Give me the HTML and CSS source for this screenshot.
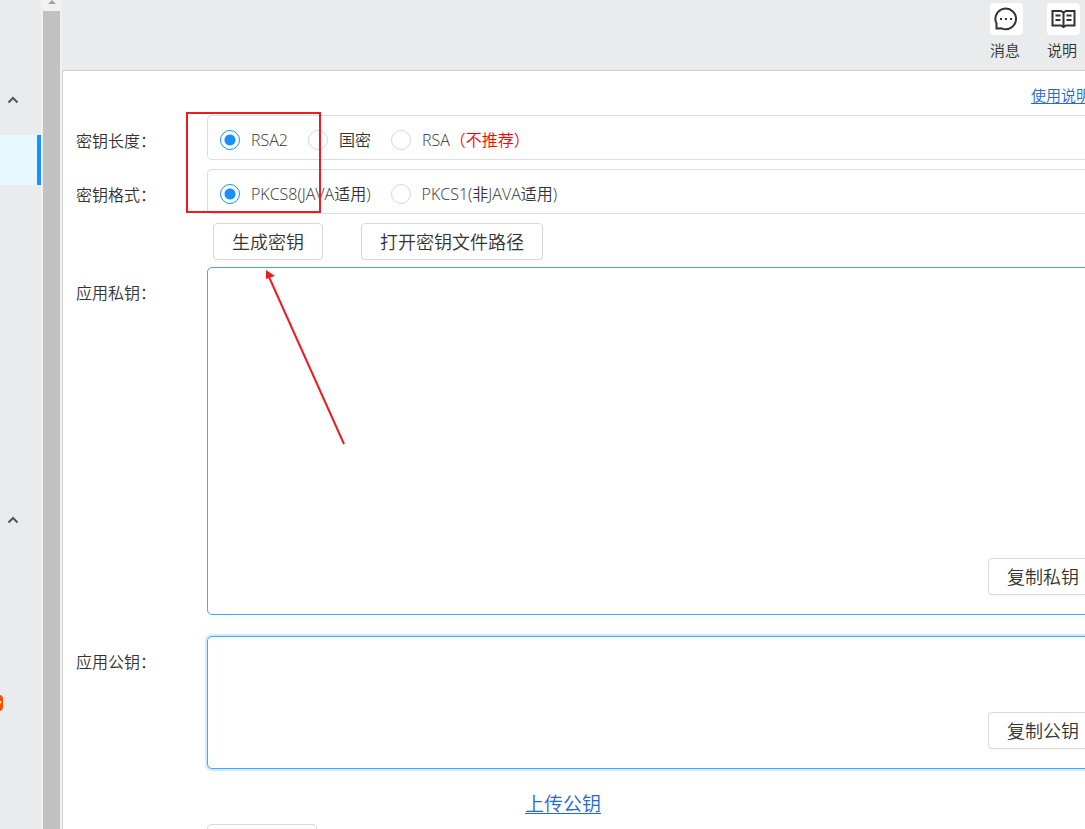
FILE: index.html
```html
<!DOCTYPE html>
<html lang="zh-CN">
<head>
<meta charset="utf-8">
<title>密钥工具</title>
<link rel="stylesheet" href="styles.css">
</head>
<body>
<div class="app">
  <nav class="sidebar">
    <button class="group" type="button" aria-label="收起">
      <svg class="chevron" viewBox="0 0 12 8"><path d="M1.500 6.500 6 2l4.500 4.500"/></svg>
    </button>
    <a class="item active" href="#" aria-label="当前页"></a>
    <div class="spacer"></div>
    <button class="group" type="button" aria-label="收起">
      <svg class="chevron" viewBox="0 0 12 8"><path d="M1.500 6.500 6 2l4.500 4.500"/></svg>
    </button>
    <div class="item tagged"><span class="badge">new</span></div>
  </nav>
  <div class="scrollbar">
    <svg class="up" viewBox="0 0 10 5"><path d="M0 5 5 0l5 5z"/></svg>
    <div class="thumb"></div>
  </div>
  <div class="page">
    <header class="header">
      <a class="tool" href="#">
        <span class="tile"><svg viewBox="0 0 32 32"><path d="M6.500 25.500V20.500A10.300 10.300 0 1 1 11.500 25.300z"/><path class="dots" d="M10 15h2v2h-2zM15 15h2v2h-2zM20 15h2v2h-2z"/></svg></span>
        <span>消息</span>
      </a>
      <a class="tool" href="#">
        <span class="tile"><svg viewBox="0 0 32 32"><path d="M5.500 8H14l2.500 1.500L19 8h8.500v14.500H19L16.500 24 14 22.500H5.500zM16.500 9.500V24M8.500 12.500h5M8.500 17h5M19.500 12.500h5M19.500 17h5"/></svg></span>
        <span>说明</span>
      </a>
    </header>
    <main class="main">
      <div class="help"><a href="#">使用说明</a></div>
      <form class="form">
        <span class="label" id="len">密钥长度：</span>
        <div class="options" role="radiogroup" aria-labelledby="len">
          <label class="option"><input type="radio" name="length" checked><span>RSA2</span></label>
          <label class="option"><input type="radio" name="length"><span>国密</span></label>
          <label class="option"><input type="radio" name="length"><span>RSA<em>（不推荐）</em></span></label>
        </div>
        <span class="label" id="fmt">密钥格式：</span>
        <div class="options" role="radiogroup" aria-labelledby="fmt">
          <label class="option"><input type="radio" name="format" checked><span>PKCS8(JAVA适用)</span></label>
          <label class="option"><input type="radio" name="format"><span>PKCS1(非JAVA适用)</span></label>
        </div>
        <div class="actions">
          <button class="btn" type="button">生成密钥</button>
          <button class="btn" type="button">打开密钥文件路径</button>
        </div>
        <label class="label" for="private">应用私钥：</label>
        <div class="field">
          <textarea class="text private" id="private"></textarea>
          <button class="btn copy" type="button">复制私钥</button>
        </div>
        <label class="label" for="public">应用公钥：</label>
        <div class="field last">
          <textarea class="text public" id="public"></textarea>
          <button class="btn copy" type="button">复制公钥</button>
        </div>
        <div class="upload"><a href="#">上传公钥</a></div>
        <div class="footer"><button class="btn blank" type="button" aria-label="操作"></button></div>
      </form>
      <svg class="marks" viewBox="0 0 160 334">
        <rect x="1" y="1" width="133" height="99"/>
        <path d="M158 332 83 165"/>
        <path class="head" d="M80 158v9l9-3z"/>
      </svg>
    </main>
  </div>
</div>
</body>
</html>
```
FILE: styles.css
```css
* { box-sizing: border-box; }

body {
  margin: 0;
  overflow: hidden;
  color: #333;
  font: 350 16px/24px "Open Sans", "Noto Sans CJK SC", sans-serif;
}

button, textarea, input { font: inherit; color: inherit; margin: 0; }

.app { display: flex; height: 100vh; overflow: hidden; background: #e9ebec; }

.sidebar {
  flex: none;
  width: 41px;
  padding-top: 75px;
  overflow: hidden;
  display: flex;
  flex-direction: column;
}
.group {
  flex: none;
  height: 50px;
  padding: 0 0 0 7px;
  border: 0;
  background: none;
  text-align: left;
  line-height: 0;
}
.chevron { width: 12px; height: 8px; fill: none; stroke: #555; stroke-width: 2; }
.item { flex: none; height: 50px; }
.active { margin-top: 10px; background: #e6f7ff; border-right: 4px solid #1890ff; }
.spacer { flex: none; height: 310px; }
.tagged { position: relative; margin-top: 133px; }
.badge {
  position: absolute;
  right: 38px;
  top: 17px;
  padding: 0 2px;
  border-radius: 4px;
  background: #ff4d00;
  color: #fff;
  font-size: 11px;
  font-style: italic;
  font-weight: 700;
  line-height: 16px;
}

.scrollbar {
  flex: none;
  width: 21px;
  padding: 0 2px;
  display: flex;
  flex-direction: column;
  align-items: center;
  background: #f1f1f1;
}
.up { width: 10px; height: 4px; margin-bottom: 7px; fill: #a3a3a3; }
.thumb { flex: 1; width: 17px; background: #c1c1c1; }

.page { flex: 1; min-width: 0; display: flex; flex-direction: column; }
.header {
  flex: none;
  height: 70px;
  padding: 3px 5px 0 0;
  display: flex;
  justify-content: flex-end;
  gap: 24px;
}
.tool {
  width: 33px;
  display: flex;
  flex-direction: column;
  gap: 3px;
  color: #333;
  font-size: 15px;
  text-decoration: none;
  white-space: nowrap;
}
.tile { width: 33px; height: 32px; border-radius: 4px; background: #fff; line-height: 0; }
.tile svg { width: 32px; height: 32px; fill: none; stroke: #333; stroke-width: 2; }
.tile .dots { fill: #333; stroke: none; }

.main {
  position: relative;
  flex: 1;
  margin-right: -24px;
  padding-left: 13px;
  border: solid #d0d0d0;
  border-width: 1px 0 0 1px;
  background: #fff;
}
.help { height: 44px; padding: 12px 18px 0 0; text-align: right; font-size: 15px; }
.help a, .upload a { color: #2468d2; text-underline-offset: 2px; }

.form { display: grid; grid-template-columns: 131px 1fr; }
.label { padding-top: 14px; }
.options {
  height: 45px;
  margin-bottom: 9px;
  padding: 4px 0 0 12px;
  display: flex;
  align-items: center;
  gap: 20px;
  border: 1px solid #ddd;
  border-right: 0;
  border-radius: 5px 0 0 5px;
}
.option { display: flex; align-items: center; gap: 11px; white-space: nowrap; }
.option input {
  appearance: none;
  width: 20px;
  height: 20px;
  border: 1px solid #d9d9d9;
  border-radius: 50%;
  background: #fff;
}
.option input:checked {
  border-color: #1890ff;
  background: radial-gradient(circle, #1890ff 5px, #fff 6px);
}
.option em { color: #f00; font-style: normal; }

.actions { grid-column: 2; display: flex; gap: 38px; padding: 0 0 7px 6px; }
.btn {
  height: 37px;
  padding: 0 18px;
  border: 1px solid #d9d9d9;
  border-radius: 4px;
  background: #fff;
  box-shadow: 0 2px 0 rgba(0, 0, 0, .02);
  font-size: 18px;
  line-height: 24px;
  white-space: nowrap;
}
.field { position: relative; margin-bottom: 21px; }
.field.last { margin-bottom: 0; }
.text {
  display: block;
  width: 100%;
  padding: 10px;
  resize: none;
  outline: 0;
  border: 1px solid #40a9ff;
  border-radius: 5px;
}
.private { height: 348px; }
.public { height: 133px; box-shadow: 0 0 0 2px rgba(24, 144, 255, .2); }
.copy { position: absolute; right: 11px; bottom: 20px; }

.upload { grid-column: 2; padding: 23px 0 0 318px; font-size: 19px; }
.footer { grid-column: 2; padding-top: 8px; }
.blank { width: 110px; }

.marks {
  position: absolute;
  left: 123px;
  top: 41px;
  width: 160px;
  height: 334px;
  fill: none;
  stroke: #ed1c24;
  stroke-width: 2;
  pointer-events: none;
}
.marks .head { fill: #ed1c24; stroke: none; }
```
